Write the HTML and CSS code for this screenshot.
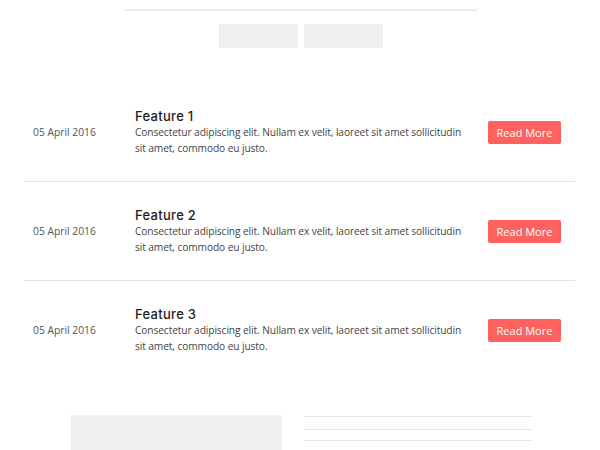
FILE: index.html
```html
<!DOCTYPE html>
<html lang="en">
<head>
<meta charset="utf-8">
<title>Features</title>
<link rel="stylesheet" href="styles.css">
</head>
<body>
<header class="top">
  <div class="top-rule"></div>
  <div class="tabs">
    <div class="tab"></div>
    <div class="tab"></div>
  </div>
</header>
<main class="list">
  <article class="row">
    <div class="date">05 April 2016</div>
    <div class="content">
      <h3 class="title">Feature 1</h3>
      <p class="text">Consectetur adipiscing elit. Nullam ex velit, laoreet sit amet sollicitudin sit amet, commodo eu justo.</p>
    </div>
    <a class="btn" href="#">Read More</a>
  </article>
  <article class="row">
    <div class="date">05 April 2016</div>
    <div class="content">
      <h3 class="title">Feature 2</h3>
      <p class="text">Consectetur adipiscing elit. Nullam ex velit, laoreet sit amet sollicitudin sit amet, commodo eu justo.</p>
    </div>
    <a class="btn" href="#">Read More</a>
  </article>
  <article class="row">
    <div class="date">05 April 2016</div>
    <div class="content">
      <h3 class="title">Feature 3</h3>
      <p class="text">Consectetur adipiscing elit. Nullam ex velit, laoreet sit amet sollicitudin sit amet, commodo eu justo.</p>
    </div>
    <a class="btn" href="#">Read More</a>
  </article>
</main>
<footer class="bottom">
  <div class="block"></div>
  <div class="rules">
    <div class="rule"></div>
    <div class="rule r2"></div>
    <div class="rule r3"></div>
  </div>
</footer>
</body>
</html>
```
FILE: styles.css
```css
html, body {
  margin: 0;
  padding: 0;
  background: #ffffff;
}
body {
  font-family: "Open Sans", "Liberation Sans", sans-serif;
  color: #444;
  height: 450px;
  overflow: hidden;
}
.top {
  padding-top: 9px;
  display: flex;
  flex-direction: column;
  align-items: center;
}
.top-rule {
  width: 353px;
  height: 2px;
  background: #ececec;
}
.tabs {
  display: flex;
  gap: 6px;
  margin-top: 13px;
  padding-left: 2px;
}
.tab {
  width: 79px;
  height: 24px;
  background: #efefef;
}
.list {
  margin: 35px 25px 0 24px;
}
.row {
  display: grid;
  grid-template-columns: 102px 330px 1fr auto;
  align-items: center;
  padding: 25px 14px 25px 9px;
  border-bottom: 1px solid #e4e4e4;
}
.row:last-child {
  border-bottom: none;
}
.date {
  font-size: 10.3px;
  color: #555;
  grid-column: 1;
}
.content {
  grid-column: 2;
}
.title {
  margin: 0;
  font-family: "Inter", "Noto Sans", sans-serif;
  font-weight: 500;
  font-size: 13px;
  letter-spacing: 0.3px;
  line-height: 16px;
  color: #1e1e1e;
}
.text {
  margin: 0;
  font-size: 10.2px;
  letter-spacing: -0.1px;
  line-height: 16px;
  color: #444;
}
.btn {
  grid-column: 4;
  display: block;
  width: 73px;
  height: 23px;
  line-height: 23px;
  text-align: center;
  background: #fd625e;
  color: #fff;
  font-size: 11px;
  text-decoration: none;
  border-radius: 2px;
}
.bottom {
  margin-top: 36px;
  display: flex;
  justify-content: center;
  gap: 22px;
  padding-left: 3px;
}
.block {
  width: 211px;
  height: 40px;
  background: #f0f0f0;
}
.rules {
  width: 228px;
  padding-top: 1px;
}
.rule {
  height: 1px;
  background: #e6e6e6;
}
.r2 { margin-top: 12px; }
.r3 { margin-top: 10px; }
```
